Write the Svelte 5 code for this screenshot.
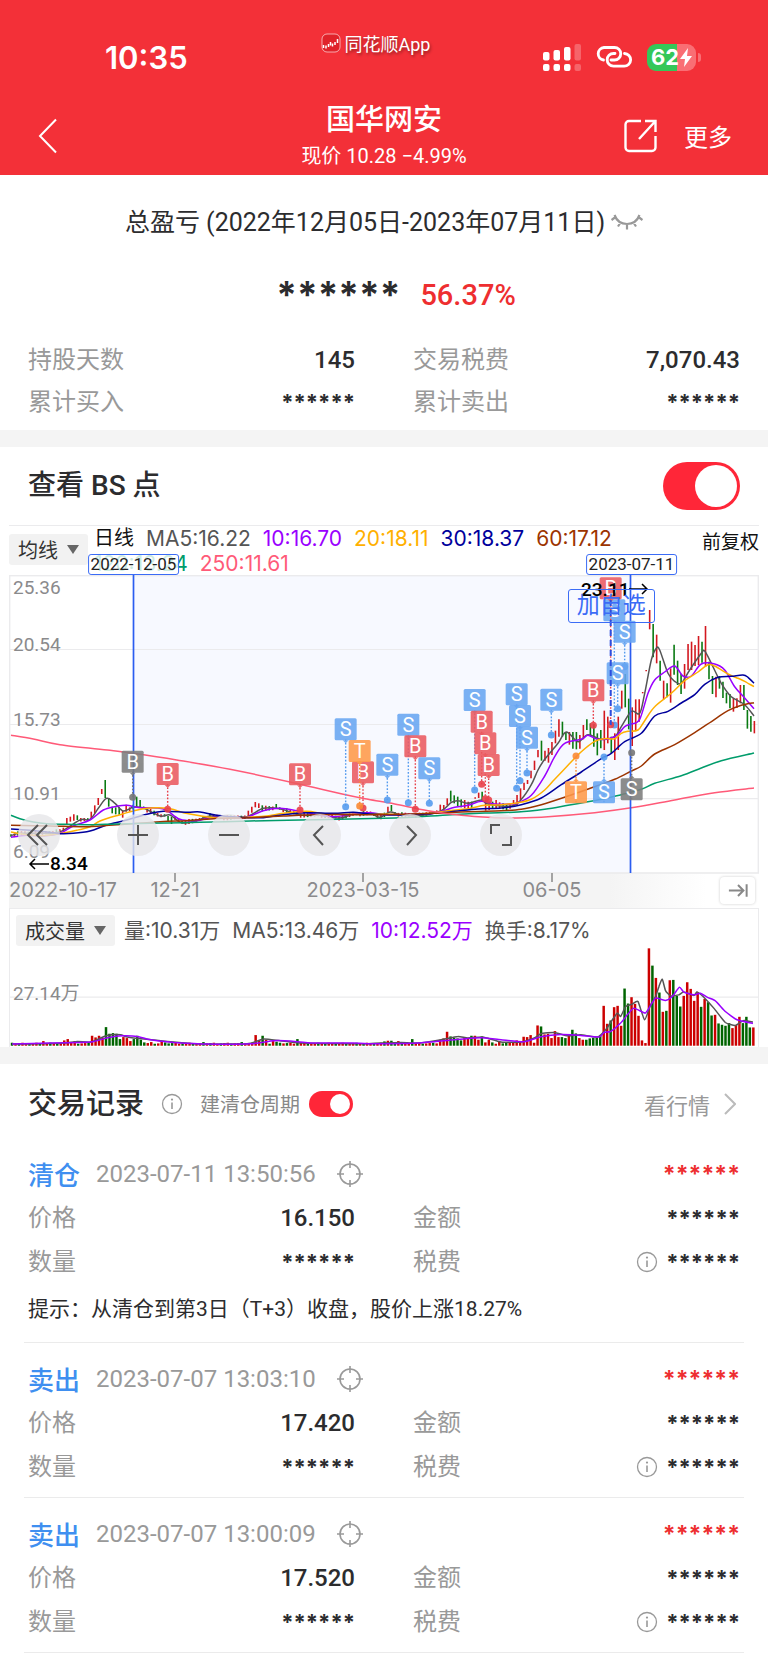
<script>
  const STEP = 10.47;
  const FIRST = 33;
  const COUNT = 214;
  const HALF = 1104;

  const join = (left, right) => [...left, ...right.map(([x, y]) => [x + HALF, y])];

  const ma = {
    ma250: join(
      [[33,496],[100,507],[180,524],[330,541],[400,550],[530,570],[690,598],[880,638],[1030,673]],
      [[0,688],[80,702],[180,722],[280,736],[380,743],[440,744],[540,740],[680,728],[800,712],[920,690],[1040,668],[1158,654]]
    ),
    ma120: join(
      [[33,736],[60,746],[100,756],[140,761],[200,763],[280,764],[350,762],[450,760],[600,757],[750,753],[900,750],[1050,747]],
      [[80,744],[150,741],[250,734],[350,729],[450,726],[530,718],[600,706],[700,688],[760,674],[820,658],[860,640],[940,617],[1000,594],[1060,572],[1158,549]]
    ),
    ma60: join(
      [[33,766],[150,768],[250,770],[340,765],[480,755],[560,752],[640,746],[750,743],[850,738],[960,734],[1100,734]],
      [[100,733],[200,730],[300,725],[400,722],[460,718],[520,704],[600,678],[680,650],[740,628],[790,603],[820,588],[860,552],[920,524],[980,488],[1040,448],[1080,422],[1120,406],[1158,398]]
    ),
    ma30: join(
      [[33,777],[80,780],[140,786],[180,791],[220,790],[270,783],[320,765],[380,750],[440,733],[490,724],[560,727],[600,726],[650,736],[720,742],[790,743],[850,734],[920,728],[1000,730],[1060,727],[1110,732]],
      [[100,735],[200,730],[260,724],[330,717],[400,714],[460,704],[520,684],[580,644],[640,606],[700,566],[730,550],[770,515],[820,490],[860,438],[900,424],[940,399],[980,374],[1010,343],[1050,322],[1090,319],[1125,315],[1140,322],[1158,340]]
    ),
    ma20: join(
      [[33,786],[80,794],[130,797],[190,789],[230,781],[270,770],[300,753],[350,737],[400,723],[450,714],[510,716],[550,728],[600,737],[660,744],[740,742],[800,738],[850,730],[920,724],[980,732],[1060,733],[1120,731]],
      [[120,734],[200,728],[240,722],[300,716],[350,706],[400,704],[450,698],[490,688],[530,660],[560,628],[600,586],[640,545],[680,514],[710,506],[740,506],[760,490],[780,484],[810,480],[830,452],[860,410],[910,370],[950,332],[990,306],[1020,284],[1040,288],[1080,312],[1110,325],[1130,334],[1158,350]]
    ),
    ma10: join(
      [[33,802],[80,796],[130,798],[180,790],[220,768],[270,750],[310,720],[350,709],[380,706],[420,713],[470,714],[500,721],[540,748],[590,752],[640,742],[700,745],[740,742],[790,722],[840,715],[890,722],[940,732],[1000,740],[1060,732],[1110,728],[1160,735]],
      [[120,733],[200,729],[260,712],[300,706],[340,694],[380,702],[430,702],[450,698],[490,676],[530,618],[560,560],[590,520],[640,508],[660,496],[690,508],[740,500],[770,470],[790,462],[815,448],[840,370],[860,330],[890,306],[920,288],[945,318],[970,318],[1000,282],[1040,282],[1070,300],[1100,350],[1130,384],[1158,416]]
    ),
    ma5: join(
      [[33,797],[60,790],[120,790],[180,785],[240,750],[270,748],[295,715],[320,685],[345,700],[370,723],[400,712],[430,714],[480,738],[510,735],[545,758],[590,752],[630,738],[680,744],[740,740],[790,715],[840,716],[900,735],[960,736],[1020,744],[1060,733],[1110,730],[1140,742],[1170,726]],
      [[100,735],[160,736],[220,722],[250,697],[270,692],[300,700],[340,690],[360,702],[430,708],[460,688],[490,644],[510,600],[530,568],[570,520],[595,486],[630,515],[660,494],[700,508],[740,500],[760,470],[790,424],[815,430],[830,370],[850,270],[865,235],[875,240],[900,310],[920,334],[940,340],[965,300],[1000,250],[1010,243],[1030,280],[1060,340],[1090,380],[1130,404],[1158,438]]
    )
  };

  const averages = [
    { key: 'ma5', color: '#555' },
    { key: 'ma10', color: '#9a00ff' },
    { key: 'ma20', color: '#ffb000' },
    { key: 'ma30', color: '#00009c' },
    { key: 'ma60', color: '#9c3400' },
    { key: 'ma120', color: '#009c6b' },
    { key: 'ma250', color: '#ff5a78' }
  ];

  const volMa5 = join(
    [[33,433],[120,432],[190,430],[230,425],[270,427],[310,410],[330,405],[360,405],[380,412],[430,418],[500,425],[600,433],[740,432],[790,418],[840,423],[900,430],[1060,432]],
    [[0,432],[40,430],[100,428],[150,430],[220,420],[270,410],[300,415],[345,412],[400,427],[460,427],[500,415],[520,402],[560,398],[600,408],[640,405],[690,412],[715,390],[735,360],[750,340],[760,350],[775,320],[795,313],[812,305],[832,360],[850,315],[865,290],[875,260],[885,238],[895,272],[910,288],[935,285],[950,276],[980,287],[990,276],[1010,292],[1040,325],[1075,368],[1105,377],[1130,362],[1158,367]]
  );
  const volMa10 = join(
    [[33,433],[150,430],[270,427],[320,414],[365,408],[410,410],[450,420],[520,428],[620,433],[750,432],[820,423],[870,424],[940,430],[1060,430]],
    [[0,432],[150,430],[260,420],[340,414],[400,420],[470,426],[520,411],[580,404],[640,407],[695,412],[710,398],[730,395],[760,370],[780,345],[800,325],[833,340],[845,325],[865,295],[895,302],[915,290],[937,262],[950,277],[980,285],[1000,280],[1020,292],[1045,303],[1075,335],[1110,360],[1158,371]]
  );

  // One entry per session, newest first: high, low, direction.
  const recent = `453 490 r,438 485 g,420 476 g,345 420 g,345 400 r,385 414 r,385 425 r,372 415 g,368 400 g,335 384 g,318 356 g,320 382 r,318 372 g,275 328 g,168 290 r,215 278 g,198 285 r,225 288 r,215 300 r,222 300 r,282 356 r,312 372 g,272 345 g,224 314 g,295 398 r,340 382 g,332 388 r,272 332 g,194 280 r,162 262 g,120 178 r,300 304 r,366 370 r,388 455 r,388 480 r,412 528 r,386 478 g,312 412 g,362 416 r,440 540 r,490 570 r,500 550 g,440 520 r,422 540 r,480 535 g,490 556 g,462 530 g,460 498 g,448 480 g,465 508 r,495 536 r,486 538 g,486 536 g,486 524 r,486 510 g,455 500 g,448 500 r,482 520 r,516 555 r,534 578 r,542 572 r,512 572 g,540 562 r,572 600 r,602 625 r,630 642 r,638 660 r,655 690 r,675 705 r,690 706 r,700 716 r,703 722 g,700 718 g,697 714 r,690 715 r,695 715 g,695 720 r,690 722 r,665 695 g,668 684 r,682 686 r,695 715 g,695 718 r,690 715 r,688 712 g,680 708 g,676 700 g,662 695 g,685 706 r,705 722 r,704 722 r`
    .split(',').map((s) => s.split(' '));
  const recentVol = `383 383 351 370 351 376 385 370 378 375 371 345 347 307 297 321 277 303 267 247 288 320 288 240 241 333 336 278 234 197 145 430 422 348 312 292 311 266 378 318 322 362 372 318 408 414 414 416 420 420 415 401 390 404 415 412 412 394 415 402 404 380 377 429 406 412 411 424 422 427 427 429 431 425 432 428 420 428 410 420 408 408 415 415 422 416 414 410 396 416 420`
    .split(' ').map(Number);

  const earlier = {
    16: [744,762,'r'], 17: [740,755,'r'], 18: [733,752,'r'], 19: [736,750,'g'], 23: [725,745,'r'], 24: [706,730,'r'],
    25: [684,705,'r'], 26: [657,672,'r'], 27: [630,684,'g'], 28: [684,710,'g'], 29: [710,730,'g'], 30: [712,733,'g'],
    31: [712,734,'g'], 32: [722,743,'r'], 33: [704,725,'r'], 36: [680,712,'g'], 37: [690,712,'g'], 45: [738,756,'g'],
    46: [740,762,'g'], 68: [722,740,'r'], 69: [710,728,'r'], 70: [696,712,'r'], 71: [700,714,'r'], 72: [706,724,'g'],
    76: [702,716,'g'], 108: [710,726,'r'], 109: [705,724,'g']
  };
  const earlierVol = {
    9: 424, 15: 422, 16: 418, 17: 428, 18: 424, 23: 408, 24: 413, 25: 408, 26: 414, 27: 382, 28: 402, 29: 400, 30: 402,
    31: 418, 32: 412, 33: 415, 34: 424, 35: 418, 36: 408, 37: 420, 38: 428, 40: 427, 43: 424, 44: 428, 55: 427, 66: 427,
    70: 406, 71: 422, 72: 408, 73: 420, 75: 424, 76: 426, 82: 418, 83: 428, 107: 425, 108: 423, 109: 423, 111: 424, 115: 418
  };

  const valueAt = (points, x) => {
    for (let i = 1; i < points.length; i++) {
      const [x0, y0] = points[i - 1];
      const [x1, y1] = points[i];
      if (x <= x1) return y0 + ((y1 - y0) * (x - x0)) / (x1 - x0);
    }
    return points[points.length - 1][1];
  };

  const sessions = Array.from({ length: COUNT }, (_, i) => {
    const x = FIRST + i * STEP;
    const back = COUNT - 1 - i;
    const wave = (i * 7919) % 11;
    if (back < recent.length) {
      const [high, low, dir] = recent[back];
      return { x, high: +high, low: +low, dir, vol: recentVol[back] ?? 424 };
    }
    const mid = valueAt(ma.ma5, x);
    const [high, low, dir] = earlier[i] ?? [mid - 4 - (wave % 5), mid + 3 + (wave % 6), wave % 3 ? 'r' : 'g'];
    return { x, high, low, dir, vol: earlierVol[i] ?? 429 + (wave % 4) };
  });

  const px = (x) => (x - 27) / 3;
  const py = (y) => (y - 15) / 3;
  const vy = (y) => (y - 138) / 3;

  function curve(points, yOf, tension = 6) {
    const p = points.map(([x, y]) => [px(x), yOf(y)]);
    let d = `M${p[0][0].toFixed(1)} ${p[0][1].toFixed(1)}`;
    for (let i = 0; i < p.length - 1; i++) {
      const a = p[i - 1] ?? p[i];
      const b = p[i];
      const c = p[i + 1];
      const e = p[i + 2] ?? c;
      const n = [
        b[0] + (c[0] - a[0]) / tension, b[1] + (c[1] - a[1]) / tension,
        c[0] - (e[0] - b[0]) / tension, c[1] - (e[1] - b[1]) / tension, c[0], c[1]
      ].map((v) => v.toFixed(1));
      d += `C${n.join(' ')}`;
    }
    return d;
  }

  const tint = { B: '#eb5a60', S: '#68a6f2', T: '#ff9a4a', X: '#7d7d7d' };
  const dotTint = { B: '#e8404a', S: '#559bee', T: '#f98a35', X: '#777' };

  // x, badge top, dot height, letter, muted
  const marks = [
    [398,542,682,'B',true],[503,579,718,'B'],[900,580,720,'B'],[1037,445,710,'S'],[1089,574,714,'B'],[1079,510,708,'T'],
    [1162,551,690,'S'],[1225,431,698,'S'],[1246,496,718,'B'],[1288,562,700,'S'],[1424,357,660,'S'],[1445,422,643,'B'],
    [1456,487,686,'B'],[1466,552,690,'B'],[1550,340,655,'S'],[1560,405,632,'S'],[1581,470,609,'S'],[1654,356,495,'S'],
    [1780,328,466,'B'],[1843,88,465,'S'],[1832,22,464,'B'],[1874,152,290,'S'],[1853,277,416,'S'],
    [1728,634,558,'T'],[1812,634,561,'S'],[1895,625,548,'S',true]
  ].map(([x, top, dot, letter, muted]) => ({
    x: px(x), top: py(top), dot: py(dot), letter,
    fill: muted ? tint.X : tint[letter], stroke: muted ? dotTint.X : dotTint[letter]
  }));

  const prices = [['25.36', 19], ['20.54', 76], ['15.73', 151], ['10.91', 225], ['6.09', 283]];
  const ticks = [[166, '12-21'], [354, '2023-03-15'], [543, '06-05']];

  const tools = [
    { label: '快退', left: 4, d: 'M20 11 10 21l10 10M29 11 19 21l10 10' },
    { label: '放大', left: 17.2, d: 'M11 21h20M21 11v20' },
    { label: '缩小', left: 29.3, d: 'M11 21h20' },
    { label: '左移', left: 41.4, d: 'M24 12 15 21l9 10' },
    { label: '右移', left: 53.5, d: 'M18 12l9 9-9 10' },
    { label: '全屏', left: 65.6, d: 'M11 20v-9h9M22 31h9v-9' }
  ];

  const records = [
    { side: '清仓', time: '2023-07-11 13:50:56', price: '16.150', hint: '提示：从清仓到第3日（T+3）收盘，股价上涨18.27%' },
    { side: '卖出', time: '2023-07-07 13:03:10', price: '17.420' },
    { side: '卖出', time: '2023-07-07 13:00:09', price: '17.520' }
  ];

  let showBS = $state(true);
  let cycle = $state(true);
</script>

{#snippet info()}
  <svg class="info" viewBox="0 0 22 22" aria-hidden="true">
    <circle cx="11" cy="11" r="9.5" fill="none" stroke="currentColor" stroke-width="1.3" />
    <path d="M11 9.5v6.5" stroke="currentColor" stroke-width="1.6" />
    <circle cx="11" cy="6.6" r="1.1" fill="currentColor" />
  </svg>
{/snippet}

<div class="page">
  <header>
    <div class="status">
      <span class="clock">10:35</span>
      <span class="brand">
        <svg viewBox="0 0 20 20" width="20" height="20" aria-hidden="true">
          <rect x="1" y="1" width="18" height="18" rx="5" fill="#e0222a" stroke="#ffffff99" />
          <path d="M2.500 12v3M5 12.500v3M7.500 11v3M9.500 9v3.500M11.500 10.500v3M14 9v3M16.500 6v4" fill="none" stroke="#fff" stroke-width="1.500" />
        </svg>
        同花顺App
      </span>
      <span class="indicators">
        <svg viewBox="0 0 38 27" width="38" height="27" aria-hidden="true">
          <g fill="#fff">
            <rect x="0" y="8" width="6.500" height="8.500" rx="2" /><rect x="10.500" y="6" width="6.500" height="10.500" rx="2" />
            <rect x="21" y="3" width="6.500" height="13.500" rx="2" /><rect x="0" y="20" width="6.500" height="7" rx="2" />
            <rect x="10.500" y="20" width="6.500" height="7" rx="2" /><rect x="21" y="20" width="6.500" height="7" rx="2" />
            <g opacity=".25"><rect x="31.500" y="0" width="6.500" height="16.500" rx="2" /><rect x="31.500" y="20" width="6.500" height="7" rx="2" /></g>
          </g>
        </svg>
        <svg viewBox="0 0 36 22" width="36" height="22" fill="none" stroke="#fff" stroke-width="2.800" stroke-linecap="round" aria-hidden="true">
          <path d="M7.500 14A6.300 6.300 0 0 1 8 1.500H18.500a6.200 6.200 0 0 1 0 12.500H15" />
          <path d="M28.500 7.500a6.300 6.300 0 0 1-.5 12.700H17.500a6.200 6.200 0 0 1 0-12.700H19" />
        </svg>
        <span class="battery">
          <b>62</b>
          <svg viewBox="0 0 12 19" width="12" height="19" aria-hidden="true"><path d="M8 0 0 11h5l-1 8 8-11H7z" fill="#fff" /></svg>
        </span>
      </span>
    </div>
    <nav>
      <button class="back" aria-label="返回">
        <svg viewBox="0 0 20 36" width="20" height="36" aria-hidden="true"><path d="M18 1.500 2 18l16 16.500" fill="none" stroke="#fff" stroke-width="2" /></svg>
      </button>
      <div class="stock">
        <h1>国华网安</h1>
        <p>现价 10.28 −4.99%</p>
      </div>
      <div class="actions">
        <button aria-label="分享">
          <svg viewBox="0 0 34 34" width="34" height="34" fill="none" stroke="#fff" stroke-width="2.400" aria-hidden="true">
            <path d="M17 2H5a3.500 3.500 0 0 0-3.500 3.500v23A3.500 3.500 0 0 0 5 32h23a3.500 3.500 0 0 0 3.500-3.500V17" />
            <path d="M21 2h10.500v11M31.500 2 15 20" />
          </svg>
        </button>
        <button>更多</button>
      </div>
    </nav>
  </header>

  <section class="summary">
    <h2>
      总盈亏 (2022年12月05日-2023年07月11日)
      <svg viewBox="0 0 32 18" width="32" height="18" fill="none" stroke="#999" stroke-width="2.200" aria-hidden="true">
        <path d="M3.500 1C8 13 24 13 28.500 1M.5 6l4-3M7 12.500l2.500-4M16 10v5.500M25 12.500l-2.500-4M31.500 6l-4-3" />
      </svg>
    </h2>
    <div class="total"><span class="masked">******</span><strong>56.37%</strong></div>
    <dl class="pairs">
      <div><dt>持股天数</dt><dd>145</dd></div>
      <div><dt>交易税费</dt><dd>7,070.43</dd></div>
      <div><dt>累计买入</dt><dd class="masked">******</dd></div>
      <div><dt>累计卖出</dt><dd class="masked">******</dd></div>
    </dl>
  </section>

  <section class="market">
    <div class="heading">
      <h2 id="bs">查看 BS 点</h2>
      <input class="switch large" type="checkbox" role="switch" aria-labelledby="bs" bind:checked={showBS} />
    </div>

    <div class="legend">
      <label class="drop">
        <select aria-label="主图指标"><option>均线</option></select>
        <svg viewBox="0 0 12 9" width="12" height="9" aria-hidden="true"><path d="M0 0h12L6 9z" fill="#666" /></svg>
      </label>
      <div class="values">
        <span class="day">日线</span>
        <span class="c5">MA5:16.22</span>
        <span class="c10">10:16.70</span>
        <span class="c20">20:18.11</span>
        <span class="c30">30:18.37</span>
        <span class="c60">60:17.12</span>
        <span class="break"></span>
        <span class="c120">120:13.24</span>
        <span class="c250">250:11.61</span>
      </div>
      <span class="adjust">前复权</span>
    </div>

    <div class="plot">
      <svg class="canvas" viewBox="0 0 750 333" role="img" aria-label="日线走势">
        <defs>
          <linearGradient id="axis"><stop offset=".8" stop-color="#f4f4f4" /><stop offset=".93" stop-color="#fff" /></linearGradient>
        </defs>
        <rect y="298" width="750" height="35" fill="url(#axis)" />
        <rect x="124.500" width="497" height="298" fill="#f7f9ff" />
        <g stroke="#ebebed" stroke-width="1.200">
          <path d="M0 74.500h750M0 149.500h750M0 223.700h750" />
          <rect x=".6" y=".6" width="748.800" height="297.400" fill="none" stroke-width="1.600" />
        </g>
        <g class="axis">
          {#each prices as [text, y]}<text x="4" {y}>{text}</text>{/each}
        </g>
        {#each sessions as s}
          <path d="M{px(s.x)} {py(s.high)}V{py(s.low)}" stroke={s.dir === 'r' ? '#d3181f' : '#0a7a12'} stroke-width="1.600" />
        {/each}
        {#each averages as a}
          <path d={curve(ma[a.key], py)} fill="none" stroke={a.color} stroke-width="1.500" />
        {/each}
        <path d="M124.500 0v298M621.500 0v298" stroke="#2b5df0" stroke-width="1.700" />
        {#if showBS}
          {#each marks as m}
            <path d="M{m.x} {m.top + 21}V{m.dot}" stroke={m.stroke} stroke-width="1.400" stroke-dasharray="1.700 1.700" />
            <circle cx={m.x} cy={m.dot} r="3.500" fill={m.stroke} opacity=".9" />
            <g opacity=".88">
              <rect x={m.x - 11} y={m.top} width="22" height="22" rx="1.500" fill={m.fill} />
              {#if m.dot > m.top}<path d="M{m.x - 3} {m.top + 22}h6l-3 3z" fill={m.fill} />{:else}<path d="M{m.x - 3} {m.top}h6l-3-3z" fill={m.fill} />{/if}
            </g>
            <text class="letter" x={m.x} y={m.top + 18}>{m.letter}</text>
          {/each}
          <path d="M601.700 25v125" stroke="#2b4fe0" stroke-width="2" stroke-dasharray="6 4" />
        {/if}
        <g class="extreme">
          <path d="M40 289H21M26 284l-5 5 5 5M620 14h18M633 9l5 5-5 5" fill="none" stroke="#000" stroke-width="1.500" />
          <text x="41" y="295">8.34</text>
          <text x="572" y="21">23.11</text>
        </g>
        <g class="axis dates">
          <text x="0" y="322">2022-10-17</text>
          {#each ticks as [x, text]}
            <path d="M{x} 298v9" stroke="#888" stroke-width="1.500" />
            <text class="mid" {x} y="322">{text}</text>
          {/each}
        </g>
      </svg>
      <span class="tag" style="left: 16.6%">2022-12-05</span>
      <span class="tag" style="left: 83%">2023-07-11</span>
      <button class="watch">加自选</button>
      {#each tools as t}
        <button class="tool" style="left: {t.left}%" aria-label={t.label}>
          <svg viewBox="0 0 42 42" width="42" height="42" fill="none" stroke="#555" stroke-width="2" aria-hidden="true"><path d={t.d} /></svg>
        </button>
      {/each}
      <button class="end" aria-label="最新">
        <svg viewBox="0 0 22 14" width="20" height="13" fill="none" stroke="#888" stroke-width="2.200" aria-hidden="true"><path d="M1 7h15M11 1l6 6-6 6M20.500 0v14" /></svg>
      </button>
    </div>

    <div class="volume">
      <div class="legend">
        <label class="drop">
          <select aria-label="副图指标"><option>成交量</option></select>
          <svg viewBox="0 0 12 9" width="12" height="9" aria-hidden="true"><path d="M0 0h12L6 9z" fill="#666" /></svg>
        </label>
        <div class="values">
          <span class="c5">量:10.31万</span>
          <span class="c5">MA5:13.46万</span>
          <span class="c10">10:12.52万</span>
          <span class="c5">换手:8.17%</span>
        </div>
      </div>
      <svg class="canvas" viewBox="0 0 750 101" role="img" aria-label="成交量">
        <path d="M0 51.300h750" stroke="#ebebed" stroke-width="1.200" />
        {#each sessions as s}
          <path d="M{px(s.x)} {vy(s.vol)}V100" stroke={s.dir === 'r' ? '#cc0000' : '#006400'} stroke-width="2.500" />
        {/each}
        <path d={curve(volMa5, vy, 12)} fill="none" stroke="#555" stroke-width="1.500" />
        <path d={curve(volMa10, vy, 12)} fill="none" stroke="#9a00ff" stroke-width="1.500" />
        <g class="axis"><text x="3" y="54">27.14万</text></g>
      </svg>
    </div>
  </section>

  <section class="records">
    <div class="heading">
      <h2>交易记录</h2>
      {@render info()}
      <label for="cycle">建清仓周期</label>
      <input id="cycle" class="switch" type="checkbox" role="switch" bind:checked={cycle} />
      <a href="#quote">
        看行情
        <svg viewBox="0 0 12 22" width="12" height="22" aria-hidden="true"><path d="M1 1l10 10L1 21" fill="none" stroke="#bbb" stroke-width="2" /></svg>
      </a>
    </div>

    {#each records as r}
      <article>
        <div class="row">
          <b class="side">{r.side}</b>
          <time>{r.time}</time>
          <svg viewBox="0 0 26 26" width="26" height="26" fill="none" stroke="#999" stroke-width="1.600" aria-hidden="true">
            <circle cx="13" cy="13" r="10" /><path d="M13 0v7M13 19v7M0 13h7M19 13h7" />
          </svg>
          <span class="masked gain">******</span>
        </div>
        <dl class="pairs">
          <div><dt>价格</dt><dd>{r.price}</dd></div>
          <div><dt>金额</dt><dd class="masked">******</dd></div>
          <div><dt>数量</dt><dd class="masked">******</dd></div>
          <div><dt>税费</dt><dd class="masked">{@render info()}******</dd></div>
        </dl>
        {#if r.hint}<p>{r.hint}</p>{/if}
      </article>
    {/each}
  </section>
</div>

<style>
  :global(body) { margin: 0; background: #fff; }
  .page { font-family: Roboto, "Noto Sans CJK SC", sans-serif; color: #2c2c2e; background: #fff; }
  h1, h2, p, dl, dd { margin: 0; }
  button { border: 0; padding: 0; background: none; color: inherit; font: inherit; cursor: pointer; }
  svg { display: block; flex: none; }

  header { height: 175px; background: #f33038; color: #fff; }
  .status { display: grid; grid-template-columns: 1fr auto 1fr; height: 98px; padding: 0 68px 0 105px; }
  .clock { font: 600 31px/36px Inter, sans-serif; padding-top: 40px; }
  .brand { display: flex; align-items: center; gap: 4px; height: 36px; padding-top: 25px; font-size: 18px; text-shadow: 1px 2px 3px #0006; margin-right: 54px; }
  .indicators { display: flex; align-items: center; justify-content: flex-end; gap: 15px; height: 28px; padding-top: 43px; }
  .battery { position: relative; display: flex; align-items: center; gap: 1px; box-sizing: border-box; width: 49px; height: 27px; padding-left: 4px; border-radius: 9px; background: linear-gradient(90deg, #34c759 62%, #f96e74 62%); margin-right: 4px; }
  .battery::after { content: ""; position: absolute; right: -5px; top: 9px; width: 3px; height: 9px; border-radius: 0 3px 3px 0; background: #f96e74; }
  .battery b { font: 700 22px/27px Inter, sans-serif; }
  nav { display: grid; grid-template-columns: 1fr auto 1fr; align-items: center; height: 75px; padding: 0 36px 0 36px; }
  .back { justify-self: start; height: 36px; padding-left: 2px; }
  .stock { text-align: center; }
  h1 { font-size: 29px; line-height: 40px; font-weight: 500; }
  .stock p { font-size: 20px; line-height: 32px; }
  .actions { display: flex; align-items: center; justify-content: flex-end; gap: 26px; font-size: 24px; }

  .summary { padding: 28px 28px 7px; border-bottom: 17px solid #f4f4f4; }
  .summary h2 { display: flex; align-items: center; justify-content: center; gap: 6px; font-size: 25px; line-height: 40px; font-weight: 400; }
  .total { display: flex; align-items: flex-end; justify-content: center; gap: 20px; box-sizing: border-box; height: 96px; padding: 0 0 20px 24px; }
  .total .masked { font-size: 37px; line-height: 48px; }
  .total strong { font-size: 29px; line-height: 48px; font-weight: 500; color: #ee2e30; }

  .pairs { display: grid; grid-template-columns: 1fr 1fr; column-gap: 58px; font-size: 24px; line-height: 42px; }
  .pairs div { display: flex; justify-content: space-between; }
  dt { color: #999; }
  dd { display: flex; align-items: center; font-size: 24px; font-weight: 500; }
  .masked { font-family: Inter, sans-serif; font-size: 22px; font-weight: 700; }
  .pairs .info { margin-right: 8px; }
  .info { width: 22px; height: 22px; color: #999; }

  .heading { display: flex; align-items: center; padding: 0 28px; }
  .heading h2 { font-size: 29px; line-height: 40px; font-weight: 500; }
  .market .heading { justify-content: space-between; height: 78px; }
  .market .heading h2 { font-size: 28px; }
  .switch { appearance: none; position: relative; flex: none; width: 44px; height: 26px; margin: 0; border-radius: 24px; background: #ccc; cursor: pointer; }
  .switch:checked { background: #ff2638; }
  .switch::after { content: ""; position: absolute; top: 3px; left: 3px; width: 20px; height: 20px; border-radius: 50%; background: #fff; }
  .switch:checked::after { left: auto; right: 3px; }
  .switch.large { width: 77px; height: 48px; }
  .switch.large::after { width: 42px; height: 42px; }

  .market { border-bottom: 17px solid #f4f4f4; }
  .legend { display: flex; font: 21px/25px Inter, "Noto Sans CJK SC", sans-serif; }
  .market > .legend { height: 49px; margin: 0 9px; border-top: 1px solid #ebebed; }
  .drop { display: flex; align-items: center; box-sizing: border-box; height: 31px; padding: 0 9px; gap: 9px; border-radius: 3px; background: #f2f2f2; }
  .market > .legend .drop { margin-top: 8px; }
  select { appearance: none; border: 0; padding: 0; background: none; color: #333; font: 20px/28px "Noto Sans CJK SC", sans-serif; }
  .values { display: flex; flex-wrap: wrap; column-gap: 12px; flex: 1; padding-left: 6px; }
  .break { flex-basis: 100%; }
  .day, .adjust { color: #111; }
  .day { font-size: 20px; }
  .adjust { font-size: 19px; padding-top: 4px; }
  .c5 { color: #555; } .c10 { color: #9a00ff; } .c20 { color: #ffb000; } .c30 { color: #00009c; }
  .c60 { color: #9c3400; } .c120 { color: #009c6b; } .c250 { color: #ff5a78; }

  .plot { position: relative; margin: 0 9px; }
  .canvas { width: 100%; height: auto; }
  .axis text { font: 19px Roboto, "Noto Sans CJK SC", sans-serif; fill: #8a8a8c; }
  .axis.dates text { font: 20px Inter, sans-serif; }
  .axis .mid { text-anchor: middle; }
  .letter { font: 20px Roboto, sans-serif; fill: #fff; text-anchor: middle; }
  .extreme text { font: 500 19px Roboto, sans-serif; fill: #000; }
  .tag { position: absolute; top: -21px; transform: translateX(-50%); box-sizing: border-box; padding: 0 2px; border: 1px solid #3b6cf6; border-radius: 3px; background: #fffc; color: #222; font: 17px/19px Roboto, sans-serif; white-space: nowrap; }
  .watch { position: absolute; left: 74.5%; top: 14px; box-sizing: border-box; width: 87px; height: 34px; border: 1px solid #3b6cf6; border-radius: 3px; color: #3b6cf6; font-size: 23px; line-height: 32px; }
  .tool { position: absolute; top: 239px; width: 42px; height: 42px; margin-left: -21px; border-radius: 50%; background: #e6e6e8cc; }
  .end { position: absolute; right: 4px; bottom: 4px; display: grid; place-items: center; width: 35px; height: 27px; border-radius: 4px; background: #fff; box-shadow: 0 0 3px #0003; }

  .volume { margin: 0 9px; border: 1px solid #ebebed; border-bottom: 0; }
  .volume .legend { padding: 6px 6px 0; }
  .volume .values { padding-left: 9px; align-items: center; }

  .records .heading { height: 68px; padding-top: 6px; }
  .records .heading .info { margin: 0 17px; }
  .records label { color: #888; font-size: 20px; }
  .records .switch { margin-left: 9px; }
  .records a { display: flex; align-items: center; gap: 14px; margin-left: auto; padding-right: 4px; color: #999; font-size: 22px; text-decoration: none; }
  article { margin: 0 24px; padding: 14px 4px 8px; border-bottom: 1px solid #ebebeb; }
  .row { display: flex; align-items: center; height: 44px; }
  .side { margin-right: 16px; color: #3f8ff0; font-size: 26px; font-weight: 500; }
  time { margin-right: 21px; color: #999; font-size: 24px; }
  .gain { margin-left: auto; color: #ee2e30; font-size: 23px; }
  article .pairs { line-height: 44px; }
  article p { font-size: 21px; line-height: 50px; }
</style>
